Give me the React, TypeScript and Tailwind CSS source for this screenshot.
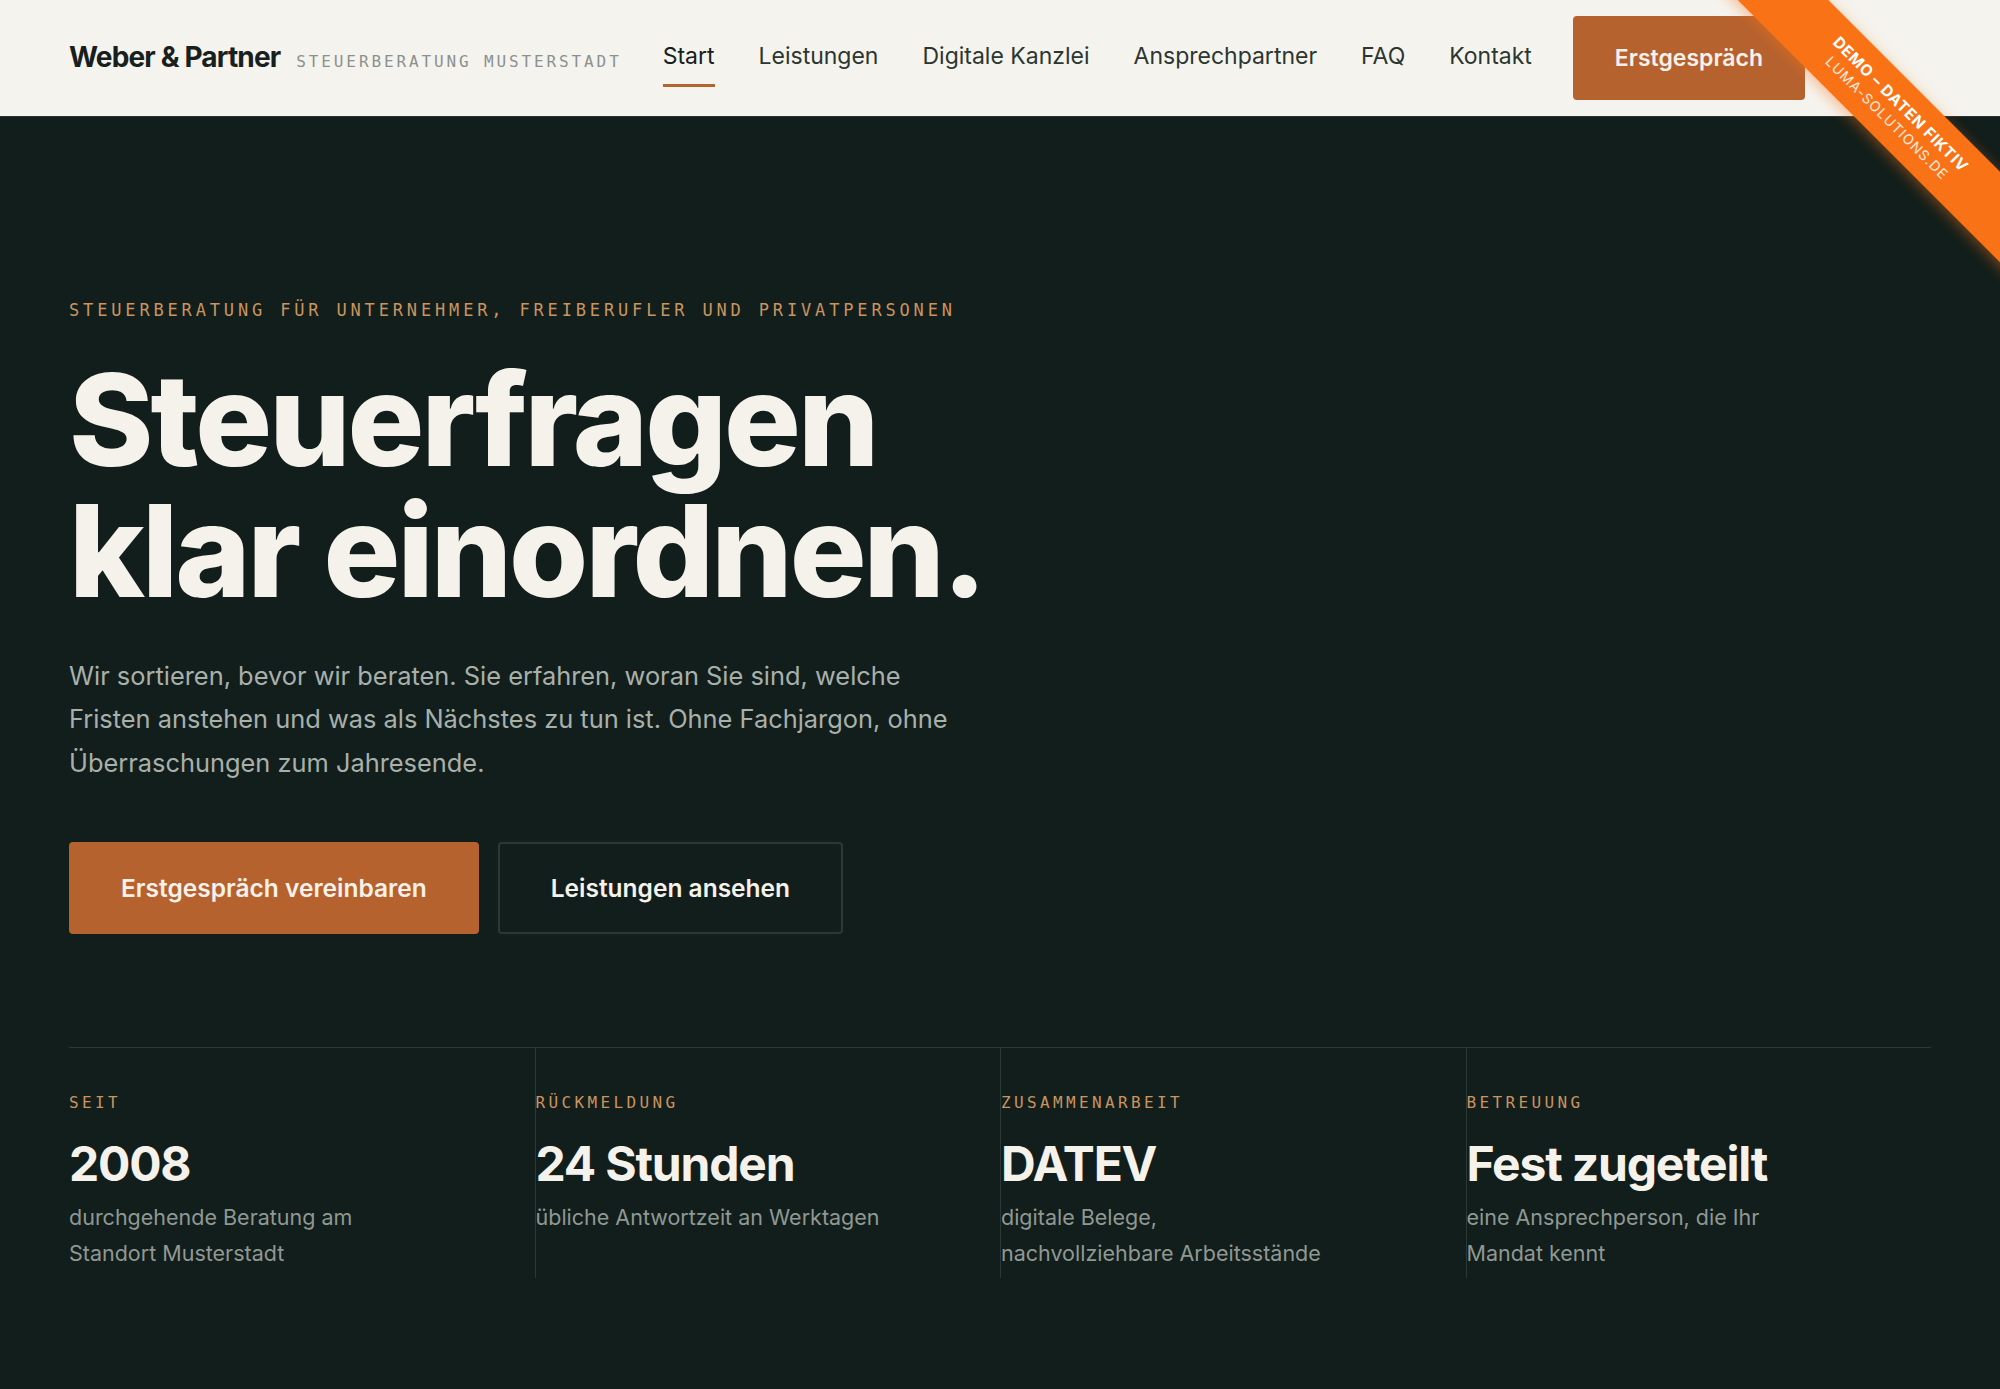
import type { FC } from 'react';

const navItems = ['Start', 'Leistungen', 'Digitale Kanzlei', 'Ansprechpartner', 'FAQ', 'Kontakt'];

const stats = [
  { label: 'SEIT', value: '2008', lines: ['durchgehende Beratung am', 'Standort Musterstadt'] },
  { label: 'RÜCKMELDUNG', value: '24 Stunden', lines: ['übliche Antwortzeit an Werktagen'] },
  { label: 'ZUSAMMENARBEIT', value: 'DATEV', lines: ['digitale Belege,', 'nachvollziehbare Arbeitsstände'] },
  { label: 'BETREUUNG', value: 'Fest zugeteilt', lines: ['eine Ansprechperson, die Ihr', 'Mandat kennt'] },
];

const DemoRibbon: FC = () => (
  <div className="pointer-events-none absolute right-0 top-0 h-[320px] w-[320px] overflow-hidden">
    <div className="absolute left-[-6px] top-[79px] flex h-[64px] w-[440px] rotate-45 flex-col items-center justify-center bg-[#f97316] text-white shadow-[0_3px_14px_rgba(249,115,22,0.45)]">
      <span className="text-[15.5px] font-bold leading-[20px] tracking-[0.05em]">DEMO – DATEN FIKTIV</span>
      <span className="text-[14px] leading-[18px] tracking-[0.07em] text-white/85">LUMA-SOLUTIONS.DE</span>
    </div>
  </div>
);

const App: FC = () => {
  return (
    <div className="relative min-h-screen overflow-hidden bg-[#121e1b] font-['Inter',sans-serif]">
      <header className="flex h-[117px] items-center border-b border-[#2a3430] bg-[#f5f3ee] px-[69px]">
        <div className="mb-[2px] flex items-baseline gap-4">
          <span className="text-[28px] font-bold tracking-[-0.03em] text-[#17201c]">Weber &amp; Partner</span>
          <span className="font-['DejaVu_Sans_Mono',monospace] text-[16px] tracking-[0.18em] text-[#8b918d]">
            STEUERBERATUNG MUSTERSTADT
          </span>
        </div>
        <nav className="mb-[4px] ml-[41px] flex items-center gap-[44px]">
          {navItems.map((item) => (
            <a
              key={item}
              href="#"
              className={`relative text-[23px] leading-[33px] ${item === 'Start' ? 'text-[#17201c]' : 'text-[#2b3631]'}`}
            >
              {item}
              {item === 'Start' && <span className="absolute left-0 right-0 top-full mt-[11px] h-[3px] bg-[#b5652f]" />}
            </a>
          ))}
        </nav>
        <a
          href="#"
          className="ml-[41px] flex h-[84px] items-center rounded-[4px] bg-[#b5622f] px-[42px] text-[23px] font-semibold text-[#f7f1ea]"
        >
          Erstgespräch
        </a>
      </header>

      <main className="px-[69px] pt-[181px] pb-[110px]">
        <p className="font-['DejaVu_Sans_Mono',monospace] text-[17px] leading-[25px] tracking-[0.226em] text-[#c9945f]">
          STEUERBERATUNG FÜR UNTERNEHMER, FREIBERUFLER UND PRIVATPERSONEN
        </p>
        <h1 className="mt-[31px] text-[128px] font-extrabold leading-[131px] tracking-[-0.023em] text-[#f5f2eb]">
          Steuerfragen
          <br />
          klar einordnen.
        </h1>
        <p className="mt-[38px] max-w-[900px] text-[25.4px] leading-[43.3px] text-[#a8b0ab]">
          Wir sortieren, bevor wir beraten. Sie erfahren, woran Sie sind, welche Fristen anstehen und was als Nächstes zu tun
          ist. Ohne Fachjargon, ohne Überraschungen zum Jahresende.
        </p>
        <div className="mt-[58px] flex gap-[19px]">
          <a
            href="#"
            className="flex h-[92px] items-center rounded-[4px] bg-[#b5622f] px-[52px] text-[24.5px] font-semibold text-[#f7f1ea]"
          >
            Erstgespräch vereinbaren
          </a>
          <a
            href="#"
            className="flex h-[92px] items-center rounded-[4px] border-2 border-[#2c3834] px-[51px] text-[24.5px] font-semibold text-[#f5f2eb]"
          >
            Leistungen ansehen
          </a>
        </div>

        <div className="mt-[113px] grid grid-cols-4 border-t border-[#2c3834]">
          {stats.map((s, i) => (
            <div key={s.label} className={`pt-[43px] pb-[7px] ${i > 0 ? 'border-l border-[#2c3834]' : ''}`}>
              <div className="font-['DejaVu_Sans_Mono',monospace] text-[16px] leading-[24px] tracking-[0.21em] text-[#c9945f]">
                {s.label}
              </div>
              <div className="mt-[22px] text-[48px] font-bold leading-[53px] tracking-[-0.025em] text-[#f5f2eb]">
                {s.value}
              </div>
              <div className="mt-[9px] text-[21.5px] leading-[36px] text-[#8f9893]">
                {s.lines.map((l) => (
                  <div key={l}>{l}</div>
                ))}
              </div>
            </div>
          ))}
        </div>
      </main>

      <DemoRibbon />
    </div>
  );
};

export default App;
